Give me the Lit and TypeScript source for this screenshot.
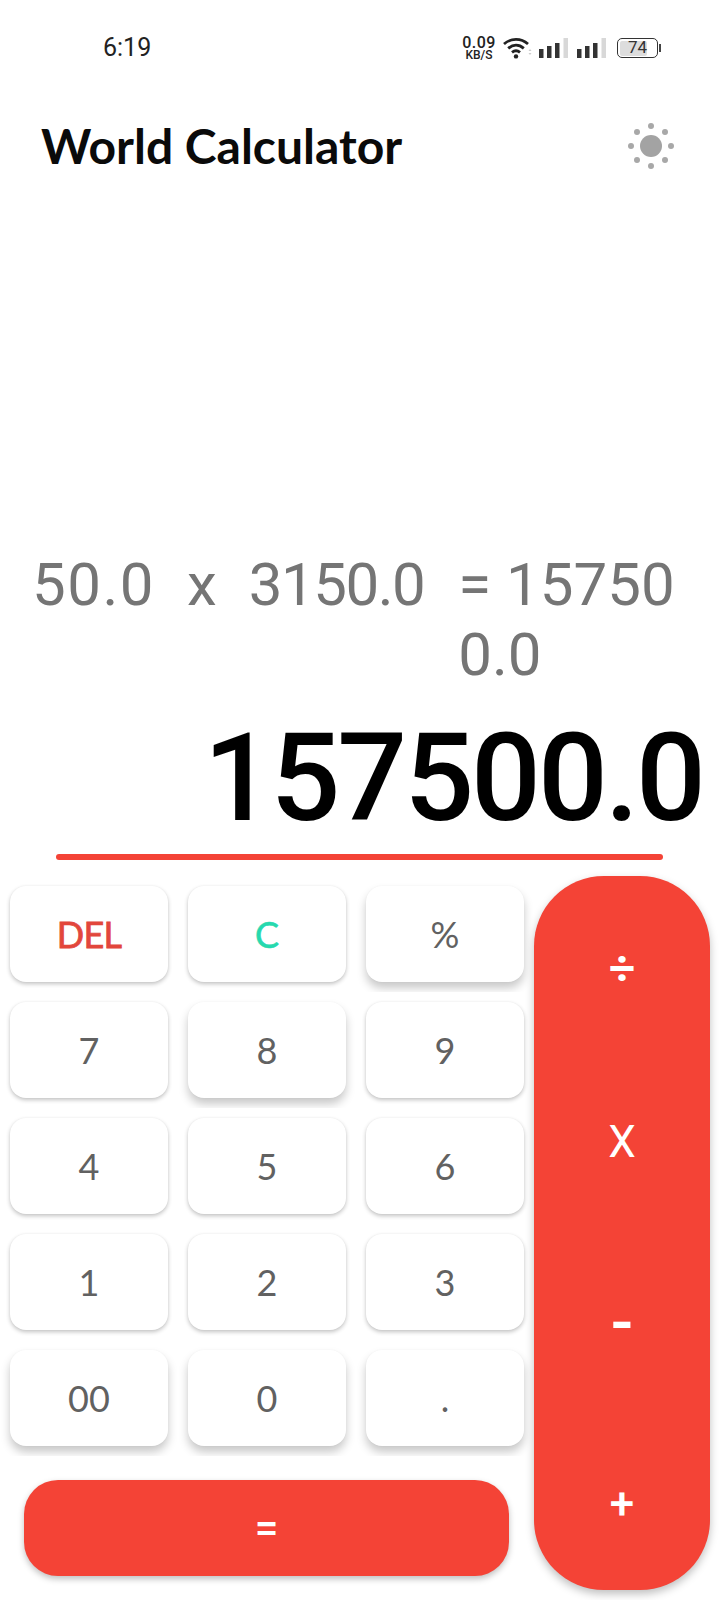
import { LitElement, html, css, svg } from "lit";
import { customElement } from "lit/decorators.js";

const sun = svg`<svg width="48" height="48" viewBox="0 0 48 48"><circle cx="24" cy="24" r="11" fill="#a3a3a3"/>${[
  [24, 4], [38, 10], [44, 24], [38, 38], [24, 44], [10, 38], [4, 24], [10, 10],
].map(([x, y]) => svg`<circle cx=${x} cy=${y} r="3" fill="#a8a8a8"/>`)}</svg>`;

const wifi = svg`<svg width="30" height="22" viewBox="0 0 30 22" fill="none" stroke="#222" stroke-width="2.8"><path d="M1 7C8 .8 18 .8 25 7"/><path d="M5.2 11.4C10 7.2 16 7.2 20.8 11.4"/><path d="M9 15.4C11.4 13.4 14.6 13.4 17 15.4"/><circle cx="13" cy="19.4" r="2.2" fill="#222" stroke="none"/><path d="M27 12l1.5 2h-3zM27 18l1.5-2h-3z" fill="#ccc" stroke="none"/></svg>`;

const signal = svg`<svg width="29" height="20" viewBox="0 0 29 20"><rect x="0" y="11" width="4.5" height="9" fill="#333"/><rect x="8" y="8" width="4.5" height="12" fill="#333"/><rect x="16" y="5" width="4.5" height="15" fill="#333"/><rect x="24.500" y="0" width="4.5" height="20" fill="#d8d8d8"/></svg>`;

const rows = [
  ["DEL", "C", "%"],
  ["7", "8", "9"],
  ["4", "5", "6"],
  ["1", "2", "3"],
  ["00", "0", "."],
];
const raised = new Set(["%", "8", "00", "0", "."]);

@customElement("app-root")
export class AppRoot extends LitElement {
  static styles = css`
    :host { display: block; width: 720px; height: 1600px; background: #fff; font-family: Lato, "Noto Sans", sans-serif; overflow: hidden; }
    .status { height: 96px; box-sizing: border-box; padding: 35px 0 0 103px; display: flex; align-items: flex-start; }
    .time { font: 400 25px/26px Roboto, sans-serif; color: #222; width: 359px; letter-spacing: 0; }
    .icons { display: flex; align-items: center; height: 26px; }
    .speed { display: flex; flex-direction: column; align-items: center; font-family: Roboto, sans-serif; font-weight: 500; color: #222; width: 34px; margin-right: 7px; }
    .speed b { font-weight: 500; font-size: 16px; line-height: 13px; letter-spacing: 0.4px; }
    .speed i { font-style: normal; font-size: 12px; line-height: 12px; }
    .sigs { display: flex; gap: 9px; margin: 0 11px 0 6px; }
    .battery { width: 41px; height: 20px; border: 1.5px solid #333; border-radius: 5px; box-sizing: border-box; position: relative; font: 400 17px/17px Roboto, sans-serif; color: #333; text-align: center; }
    .battery::before { content: ""; position: absolute; left: 1.5px; top: 1.5px; bottom: 1.5px; width: 70%; background: #ddd; border-radius: 2px; }
    .battery span { position: relative; }
    .nub { width: 2px; height: 8px; background: #444; margin-left: 1px; }
    .header { display: flex; justify-content: space-between; align-items: center; padding: 0 45px 0 41px; height: 100px; }
    h1 { margin: 0; font: 700 48px/56px Lato, sans-serif; color: #0a0a0a; letter-spacing: 0; }
    .sun { display: flex; }
    .expr { margin-top: 354px; padding-left: 32px; display: flex; gap: 32px; font: 400 60px/70px Roboto, sans-serif; color: #757575; height: 140px; }
    .expr .wide { letter-spacing: 1.5px; }
    .expr .tight { letter-spacing: -1.5px; margin-right: 2px; }
    .result { margin-top: 27px; padding-right: 17px; text-align: right; font: 500 123px/122px Roboto, sans-serif; color: #000; letter-spacing: -3px; height: 122px; }
    .rule { height: 6px; background: #f44336; border-radius: 3px; margin: 15px 57px 0 56px; }
    .pad { display: flex; margin-top: 16px; align-items: flex-start; }
    .left { width: 534px; flex: none; }
    .grid { display: grid; grid-template-columns: repeat(3, 178px); grid-auto-rows: 116px; }
    .cell { overflow: hidden; padding: 10px; box-sizing: border-box; }
    .key { height: 96px; background: #fff; border-radius: 16px; box-shadow: 0 2px 4px rgba(0,0,0,.24), 0 0 2px rgba(0,0,0,.04); display: flex; align-items: center; justify-content: center; font: 400 36px/1 Lato, sans-serif; color: #616161; }
    .key.raised { box-shadow: 0 6px 10px rgba(0,0,0,.22), 0 0 2px rgba(0,0,0,.04); }
    .key.del { color: #e2463c; -webkit-text-stroke: 0.8px #e2463c; letter-spacing: -0.8px; }
    .key.c { color: #26d9ae; -webkit-text-stroke: 0.6px #26d9ae; }
    .eq { margin: 24px 0 0 24px; width: 485px; height: 96px; border-radius: 34px; background: #f44336; box-shadow: 0 3px 6px rgba(0,0,0,.25); color: #fff; display: flex; align-items: center; justify-content: center; font: 500 42px/1 Roboto, sans-serif; }
    .ops { width: 176px; height: 714px; border-radius: 70px; background: #f44336; box-shadow: 0 4px 8px rgba(0,0,0,.25); color: #fff; font: 500 44px/1 Roboto, sans-serif; display: flex; flex-direction: column; align-items: center; }
    .ops span { display: flex; align-items: center; justify-content: center; }
    .op1 { height: 184px; font-weight: 700; font-size: 46px; }
    .op2 { height: 164px; font-weight: 400; }
    .op3 { height: 198px; font-size: 66px; }
    .op4 { height: 164px; }
  `;

  render() {
    return html`
      <div class="status">
        <div class="time">6:19</div>
        <div class="icons">
          <div class="speed"><b>0.09</b><i>KB/S</i></div>
          ${wifi}
          <div class="sigs">${signal}${signal}</div>
          <div class="battery"><span>74</span></div>
          <div class="nub"></div>
        </div>
      </div>
      <div class="header">
        <h1>World Calculator</h1>
        <div class="sun">${sun}</div>
      </div>
      <div class="expr">
        <div class="wide">50.0</div><div>x</div><div class="tight">3150.0</div><div>= 15750<br />0.0</div>
      </div>
      <div class="result">157500.0</div>
      <div class="rule"></div>
      <div class="pad">
        <div class="left">
          <div class="grid">
            ${rows.flat().map(
              (k) => html`<div class="cell"><div class="key ${k === "DEL" ? "del" : k === "C" ? "c" : ""} ${raised.has(k) ? "raised" : ""}">${k}</div></div>`
            )}
          </div>
          <div class="eq">=</div>
        </div>
        <div class="ops"><span class="op1">÷</span><span class="op2">X</span><span class="op3">-</span><span class="op4">+</span></div>
      </div>
    `;
  }
}
